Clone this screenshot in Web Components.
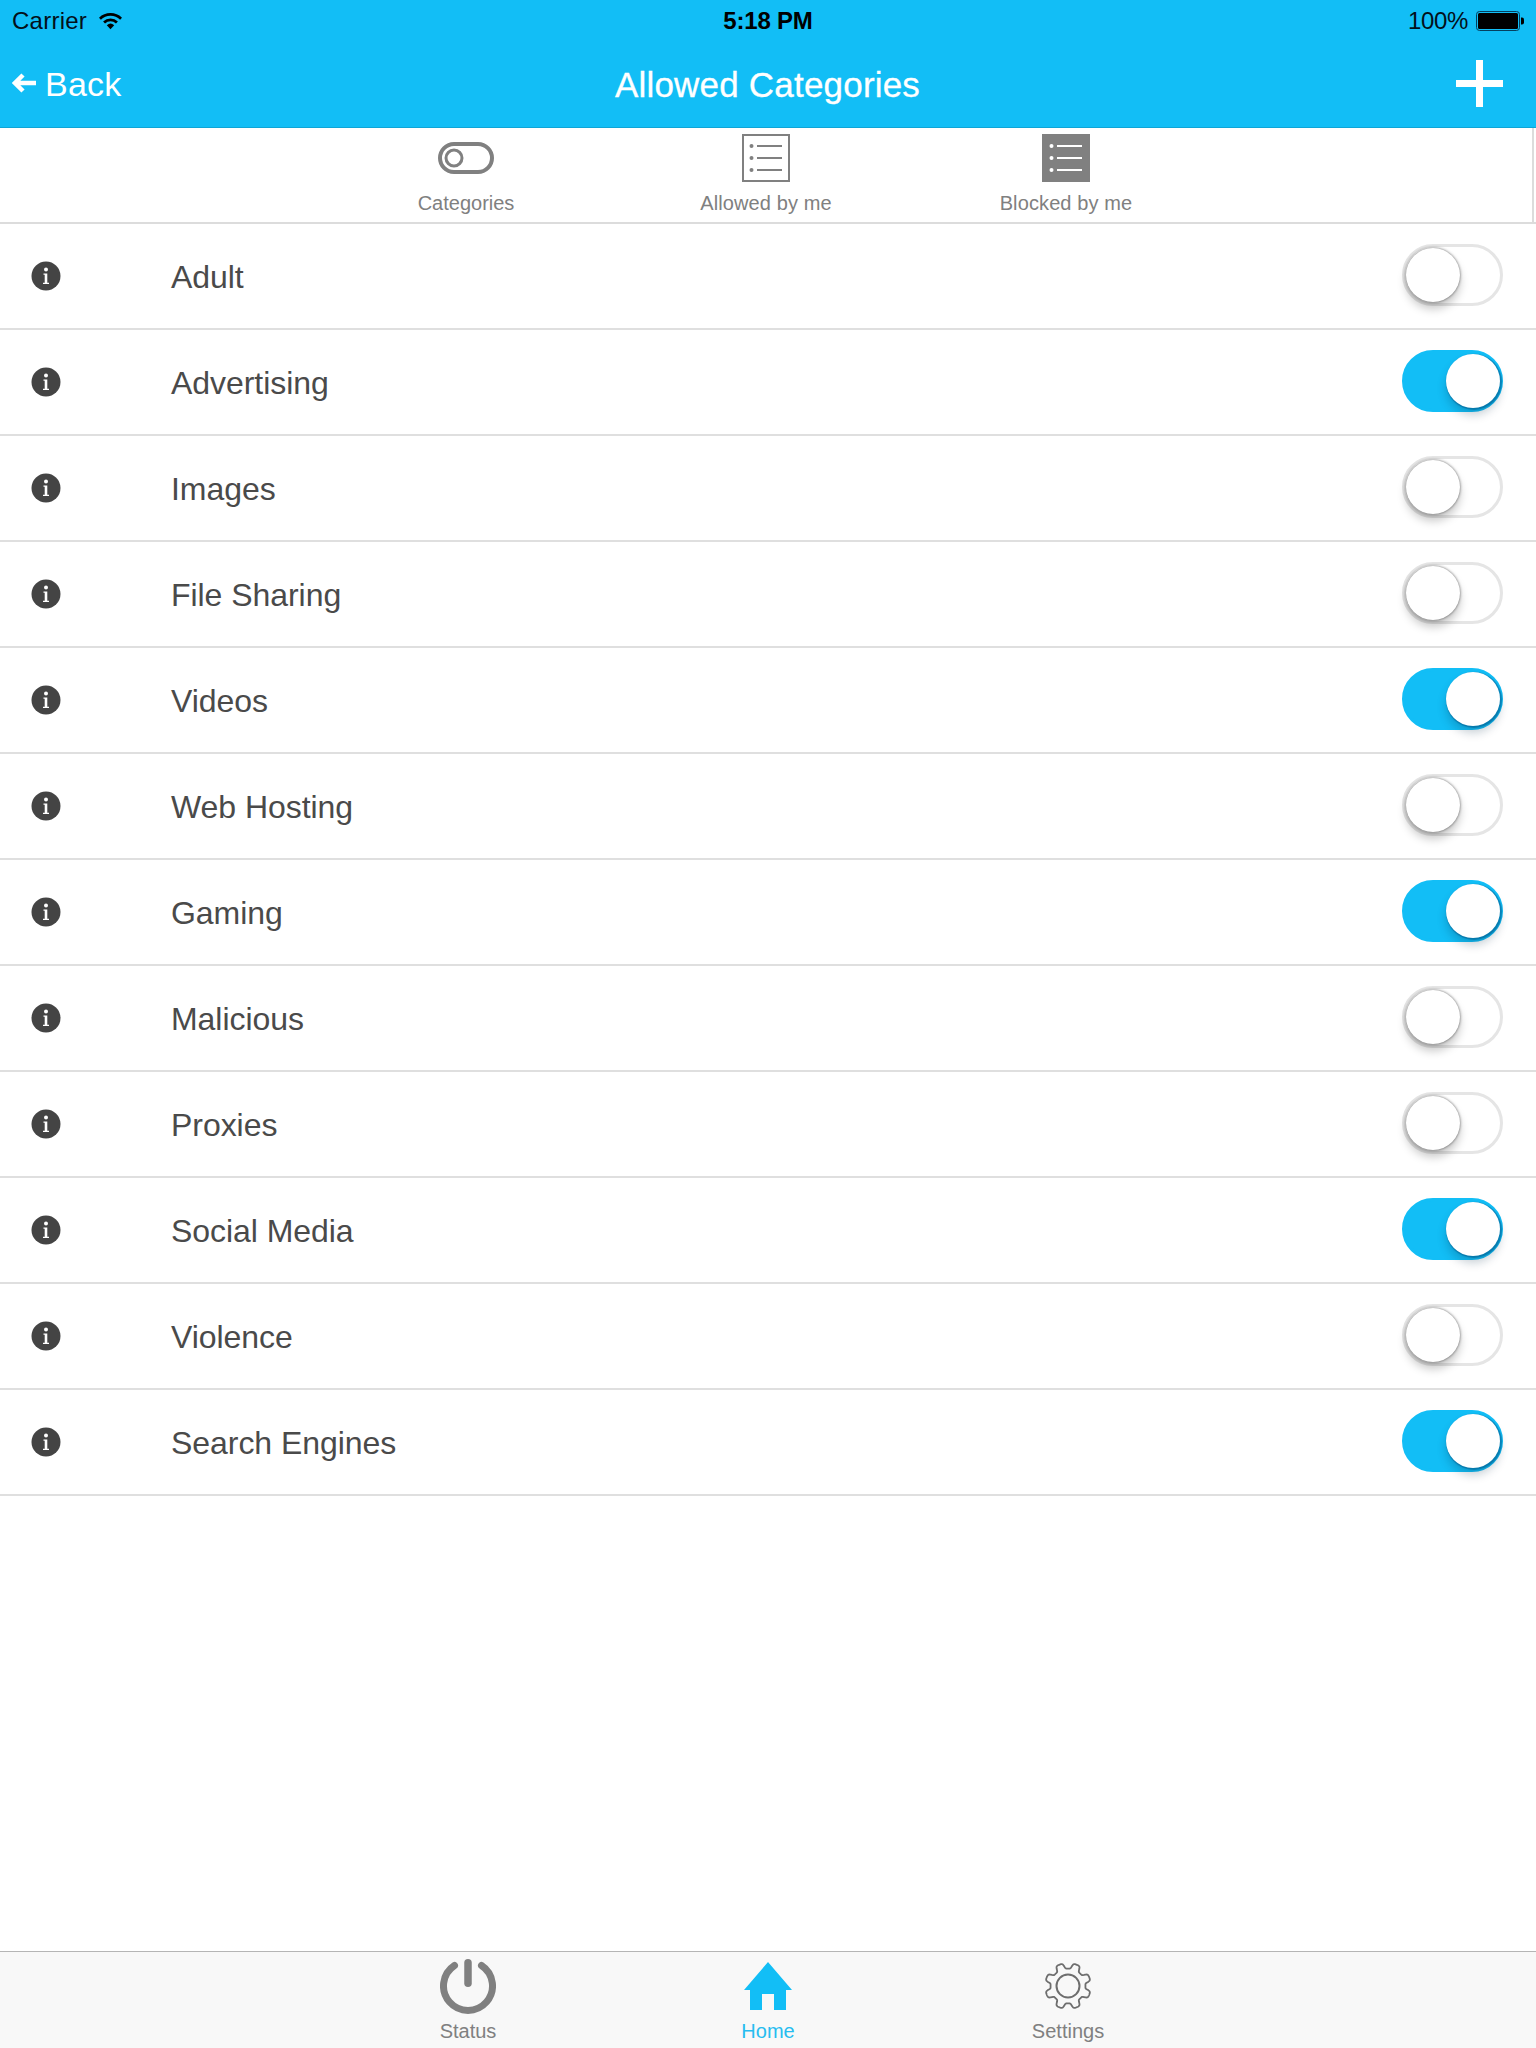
<!DOCTYPE html>
<html><head><meta charset="utf-8"><title>Allowed Categories</title>
<style>
html,body{margin:0;padding:0;background:#fff}
body{width:1536px;height:2048px;font-family:"Liberation Sans",Arial,sans-serif;overflow:hidden}
app-shell{height:2048px}
</style></head><body>
<app-shell>
  <nav-header title-text="Allowed Categories"></nav-header>
  <seg-tabs></seg-tabs>
  <category-list>
    <category-row name="Adult"></category-row>
    <category-row name="Advertising" on></category-row>
    <category-row name="Images"></category-row>
    <category-row name="File Sharing"></category-row>
    <category-row name="Videos" on></category-row>
    <category-row name="Web Hosting"></category-row>
    <category-row name="Gaming" on></category-row>
    <category-row name="Malicious"></category-row>
    <category-row name="Proxies"></category-row>
    <category-row name="Social Media" on></category-row>
    <category-row name="Violence"></category-row>
    <category-row name="Search Engines" on></category-row>
  </category-list>
  <bottom-tabs></bottom-tabs>
</app-shell>
<script>
function def(name,html,init){
  customElements.define(name,class extends HTMLElement{
    constructor(){super();this.attachShadow({mode:'open'}).innerHTML=html;}
    connectedCallback(){if(init)init(this);}
  });
}
def('app-shell',`<style>:host{display:flex;flex-direction:column;width:1536px}
::slotted(category-list){flex:1}</style><slot></slot>`);

def('nav-header',`<style>
:host{display:block;height:127px;background:#12bef6;border-bottom:1px solid #0ea5d6;color:#fff}
.status{height:42px;display:grid;grid-template-columns:1fr auto 1fr;align-items:center;color:#03101a;font-size:24px;padding:0 12px;box-sizing:border-box}
.l{display:flex;align-items:center;gap:12px}
.l span{letter-spacing:.25px}
.t{font-weight:700;font-size:24px;color:#000;letter-spacing:-.2px}
.r{display:flex;justify-content:flex-end;align-items:center;gap:8px}
.r span{letter-spacing:-.35px}
.nav{height:85px;display:grid;grid-template-columns:1fr auto 1fr;align-items:center;padding:0 33px 0 12px;box-sizing:border-box}
.back{display:flex;align-items:center;gap:9px;font-size:34px}
.back span{letter-spacing:.25px}
.back svg{margin-top:-3px}
.title{font-size:35px;letter-spacing:.2px;-webkit-text-stroke:.3px #fff;transform:translateX(10px)}
.plus{justify-self:end;margin-top:-2px}
svg{display:block}
</style>
<div class="status">
  <div class="l"><span>Carrier</span>
    <svg width="23" height="19" viewBox="0 0 25 19"><path d="M1 6.500a16.500 16.500 0 0 1 23 0" fill="none" stroke="#000" stroke-width="3"/><path d="M5.500 10.500a10 10 0 0 1 14 0" fill="none" stroke="#000" stroke-width="3"/><path d="M8.500 13.500a6 6 0 0 1 8 0L12.500 18z" fill="#000"/></svg>
  </div>
  <div class="t">5:18 PM</div>
  <div class="r"><span>100%</span>
    <svg width="48" height="20" viewBox="0 0 48 20"><rect x=".5" y=".5" width="43" height="19" rx="3" fill="none" stroke="#04405f"/><rect x="2" y="2" width="40" height="16" rx="1.500" fill="#000"/><path d="M45 6.500h1a2 2 0 0 1 2 2v3a2 2 0 0 1-2 2h-1z" fill="#000"/></svg>
  </div>
</div>
<div class="nav">
  <div class="back">
    <svg width="24" height="20" viewBox="0 0 24 20"><path d="M24 10H3M11 2l-8 8 8 8" fill="none" stroke="#fff" stroke-width="4.500"/></svg>
    <span>Back</span></div>
  <div class="title" id="t"></div>
  <svg class="plus" width="47" height="47" viewBox="0 0 47 47"><path d="M23.500 0v47M0 23.500h47" stroke="#fff" stroke-width="7"/></svg>
</div>`,el=>{el.shadowRoot.getElementById('t').textContent=el.getAttribute('title-text');});

def('seg-tabs',`<style>
:host{display:block;height:96px;box-sizing:border-box;border-bottom:2px solid #dcdcdc;padding-right:2px}
.w{display:grid;grid-template-columns:repeat(3,300px);justify-content:center;height:100%;border-right:2px solid #dcdcdc}
.i{display:flex;flex-direction:column;align-items:center;padding-top:6px;color:#808080;font-size:20px;box-sizing:border-box}
.s{letter-spacing:.12px}
.ic{height:48px;display:flex;align-items:center;margin-bottom:10px}
svg{display:block}
</style><div class="w">
<div class="i"><div class="ic"><svg width="56" height="32" viewBox="0 0 56 32"><rect x="2" y="2" width="52" height="28" rx="14" fill="none" stroke="#808080" stroke-width="4"/><circle cx="16" cy="16" r="8" fill="none" stroke="#808080" stroke-width="3"/></svg></div><span>Categories</span></div>
<div class="i"><div class="ic"><svg width="48" height="48" viewBox="0 0 48 48"><rect x="1" y="1" width="46" height="46" fill="#fff" stroke="#808080" stroke-width="2"/><path d="M15 12h25M15 24h25M15 36h25" stroke="#808080" stroke-width="2"/><circle cx="9.500" cy="12" r="2" fill="#808080"/><circle cx="9.500" cy="24" r="2" fill="#808080"/><circle cx="9.500" cy="36" r="2" fill="#808080"/></svg></div><span class="s">Allowed by me</span></div>
<div class="i"><div class="ic"><svg width="48" height="48" viewBox="0 0 48 48"><rect width="48" height="48" fill="#808080"/><path d="M15 12h25M15 24h25M15 36h25" stroke="#fff" stroke-width="2"/><circle cx="9.500" cy="12" r="2" fill="#fff"/><circle cx="9.500" cy="24" r="2" fill="#fff"/><circle cx="9.500" cy="36" r="2" fill="#fff"/></svg></div><span class="s">Blocked by me</span></div>
</div>`);

def('category-list',`<style>:host{display:block}</style><slot></slot>`);

def('category-row',`<style>
:host{display:flex;align-items:center;height:106px;box-sizing:border-box;border-bottom:2px solid #dfdfdf;padding:0 33px 0 31px;color:#4a4a4a}
.info{width:30px;height:30px;flex:none;margin-right:110px}
.n{flex:1;font-size:32px;letter-spacing:-.05px;padding-top:2px}
</style>
<svg class="info" viewBox="0 0 30 30"><circle cx="15" cy="15" r="14.500" fill="#444"/><circle cx="15" cy="8.500" r="2" fill="#fff"/><path d="M12.500 12.500h3.800v9.300h1.700v1.200h-6v-1.200h1.700v-8.100h-1.200z" fill="#fff"/></svg>
<div class="n" id="n"></div>
<ios-switch id="s"></ios-switch>`,el=>{
  el.shadowRoot.getElementById('n').textContent=el.getAttribute('name');
  if(el.hasAttribute('on'))el.shadowRoot.getElementById('s').setAttribute('on','');
});

def('ios-switch',`<style>
:host{display:block;position:relative;width:101px;height:62px;box-sizing:border-box;border-radius:31px;border:3px solid #e5e5e5;background:#fff;margin-top:-2px}
:host([on]){background:#12bef6;border-color:#12bef6}
.k{position:absolute;left:1px;top:1px;width:54px;height:54px;border-radius:50%;background:#fff;box-shadow:0 0 3px rgba(0,0,0,.6),0 7px 10px rgba(0,0,0,.22)}
:host([on]) .k{left:41.400px;box-shadow:1px 1px 1px 1px rgba(0,90,140,.55),0 7px 10px rgba(0,40,70,.22)}
</style><div class="k"></div>`);

def('bottom-tabs',`<style>
:host{display:block;height:97px;box-sizing:border-box;border-top:1px solid #b5b5b5;background:#f8f8f8}
.w{display:grid;grid-template-columns:repeat(3,300px);justify-content:center;height:100%}
.i{display:flex;flex-direction:column;align-items:center;color:#808080;font-size:20px;padding-top:6px}
.a{color:#27bdf0}
.ic{height:56px;display:flex;align-items:center;margin-bottom:6px}
svg{display:block}
</style><div class="w">
<div class="i"><div class="ic"><svg width="56" height="55" viewBox="0 0 56 55"><path d="M14.500 6.500A24.500 24.500 0 1 0 41.500 6.500" fill="none" stroke="#808080" stroke-width="7" stroke-linecap="round"/><path d="M28 3.750v20.500" stroke="#808080" stroke-width="7.500" stroke-linecap="round"/></svg></div><span>Status</span></div>
<div class="i a"><div class="ic"><svg width="48" height="48" viewBox="0 0 48 48"><path d="M24 0 48 28H42V48H30V32H18V48H6V28H0z" fill="#12bef6"/></svg></div><span>Home</span></div>
<div class="i"><div class="ic"><svg width="48" height="48" viewBox="0 0 48 48"><path id="g" fill="none" stroke="#6e6e6e" stroke-width="1.800" stroke-linejoin="round"/><circle cx="24" cy="24" r="11.500" fill="none" stroke="#6e6e6e" stroke-width="2"/></svg></div><span>Settings</span></div>
</div>`,el=>{
  let d='';
  for(let a=0;a<240;a++){
    const t=a/240*2*Math.PI;
    const r=20.200+2.800*Math.tanh(-2.500*Math.cos(8*t));
    d+=(a?'L':'M')+(24+r*Math.sin(t)).toFixed(2)+' '+(24-r*Math.cos(t)).toFixed(2);
  }
  el.shadowRoot.getElementById('g').setAttribute('d',d+'z');
});
</script>
</body></html>
